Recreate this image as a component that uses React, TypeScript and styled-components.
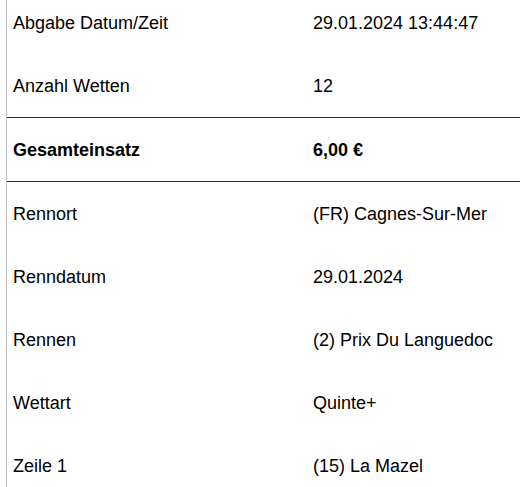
import React from "react";
import styled, { createGlobalStyle } from "styled-components";

const Global = createGlobalStyle`
  html, body { margin: 0; padding: 0; background: #fff; overflow: hidden; }
  body { font-family: "Liberation Sans", Arial, sans-serif; color: #000; }
`;

const Frame = styled.div`
  margin-top: -9px;
  margin-left: 6px;
  border-left: 1px solid #c4c4c4;
  width: 514px;
  min-height: 520px;
`;

const Table = styled.div`
  display: flex;
  flex-direction: column;
`;

const Row = styled.div<{ $strong?: boolean }>`
  display: grid;
  grid-template-columns: 300px 1fr;
  box-sizing: border-box;
  height: ${(p) => (p.$strong ? "65px" : "63px")};
  align-items: center;
  font-size: 18px;
  line-height: 21px;
  font-weight: ${(p) => (p.$strong ? 700 : 400)};
  border-top: ${(p) => (p.$strong ? "1px solid #1d3144" : "none")};
  border-bottom: ${(p) => (p.$strong ? "1px solid #1d3144" : "none")};
`;

const Cell = styled.div`
  padding-left: 6px;
  padding-top: 2px;
`;

const rows: { label: string; value: string; strong?: boolean }[] = [
  { label: "Abgabe Datum/Zeit", value: "29.01.2024 13:44:47" },
  { label: "Anzahl Wetten", value: "12" },
  { label: "Gesamteinsatz", value: "6,00 €", strong: true },
  { label: "Rennort", value: "(FR) Cagnes-Sur-Mer" },
  { label: "Renndatum", value: "29.01.2024" },
  { label: "Rennen", value: "(2) Prix Du Languedoc" },
  { label: "Wettart", value: "Quinte+" },
  { label: "Zeile 1", value: "(15) La Mazel" },
];

export default function App() {
  return (
    <>
      <Global />
      <Frame>
        <Table>
          {rows.map((r) => (
            <Row key={r.label} $strong={r.strong}>
              <Cell>{r.label}</Cell>
              <Cell>{r.value}</Cell>
            </Row>
          ))}
        </Table>
      </Frame>
    </>
  );
}
